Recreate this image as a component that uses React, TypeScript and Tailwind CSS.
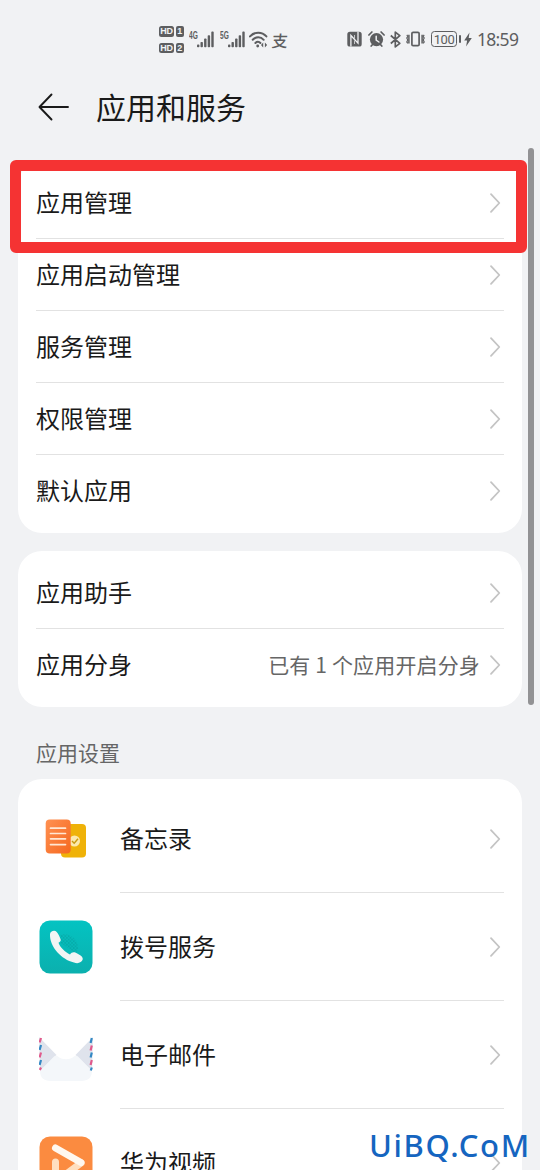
import React from "react";

type Row = {
  label: string;
  value?: string;
  icon?: React.ReactNode;
};

const Chevron = () => (
  <svg width="12" height="22" viewBox="0 0 12 22" fill="none" className="shrink-0">
    <path
      d="M2 2.2 10.3 11 2 19.8"
      stroke="#c4c4c4"
      strokeWidth="1.8"
      strokeLinecap="round"
      strokeLinejoin="round"
    />
  </svg>
);

const HdBadge = ({ sim }: { sim: number }) => (
  <div className="flex gap-[2px] text-[9px] leading-[11px] font-bold text-[#f1f2f4] font-['Liberation_Sans']">
    <span className="w-[15px] h-[10.5px] rounded-[2.5px] bg-[#5d5e60] text-center tracking-[-0.3px]">HD</span>
    <span className="w-[7.5px] h-[10.5px] rounded-[2px] bg-[#5d5e60] text-center">{sim}</span>
  </div>
);

const Signal = ({ type }: { type: string }) => (
  <div className="flex">
    <span className="w-[8px] text-[10px] leading-[9px] font-bold origin-left scale-x-[0.66] font-['Liberation_Sans']">
      {type}
    </span>
    <svg width="17" height="17" viewBox="0 0 17 17" fill="currentColor">
      <rect x="0" y="13.6" width="2.4" height="2.6" rx=".8" />
      <rect x="3.5" y="11" width="2.4" height="5.2" rx=".8" />
      <rect x="7.1" y="7.5" width="2.4" height="8.7" rx=".8" />
      <rect x="10.7" y="4.2" width="2.4" height="12" rx=".8" />
      <rect x="14.3" y=".6" width="2.4" height="15.6" rx=".8" />
    </svg>
  </div>
);

const WifiIcon = () => (
  <svg width="19" height="17" viewBox="0 0 19 17" fill="none" stroke="currentColor" strokeWidth="2" strokeLinecap="round">
    <path d="M1 5.4C5.5.4 13 .4 17.4 5.4M3.7 8.8c3.1-3.3 8-3.3 11 0M6.4 12c1.6-1.6 3.6-1.600 5 0" />
    <circle cx="8.7" cy="15" r="1.4" fill="currentColor" stroke="none" />
    <path d="m14.200 11.600-2.200 2.400 2.200 2.400zM15.900 11.600l2.200 2.400-2.200 2.400z" fill="currentColor" stroke="none" />
  </svg>
);

const NfcIcon = () => (
  <svg width="15" height="16" viewBox="0 0 15 16">
    <rect x=".3" y=".8" width="14.4" height="14.8" rx="2.6" fill="currentColor" />
    <path
      d="M3.9 15.500V4.500L11 12.100V.8"
      fill="none"
      stroke="#f1f2f4"
      strokeWidth="1.300"
    />
    <path d="M7.500 4v3.500M7.500 9.500V13" stroke="#f1f2f4" strokeWidth=".7" />
  </svg>
);

const AlarmIcon = () => (
  <svg width="17" height="16" viewBox="0 0 17 16" fill="none" stroke="currentColor" strokeLinecap="round">
    <circle cx="8.5" cy="8.6" r="6.6" fill="currentColor" stroke="none" />
    <path d="M.9 4 3.900 1M16.100 4 13.100 1M3.200 15l1.600-1.800M13.800 15l-1.600-1.800" strokeWidth="1.7" />
    <path d="M8.2 5.2v4l2.7 1.8" stroke="#f1f2f4" strokeWidth="1.500" />
  </svg>
);

const BluetoothIcon = () => (
  <svg width="11" height="17" viewBox="0 0 11 17" fill="none" stroke="currentColor" strokeWidth="1.7" strokeLinejoin="round">
    <path d="m.8 4.5 9 7.8-4.5 3.6V1.1l4.5 3.6-9 7.8" />
  </svg>
);

const VibrateIcon = () => (
  <svg width="19" height="16" viewBox="0 0 19 16" fill="none" stroke="currentColor" strokeWidth="1.7">
    <rect x="5.900" y="1.300" width="7.200" height="13.400" rx="1.200" />
    <path d="m.8 3.800 1 1.400-1 1.900 1 1.900-1 1.900 1 1.400M18.200 3.800l-1 1.400 1 1.900-1 1.900 1 1.900-1 1.400" strokeWidth="1.200" />
    <path d="M2.900 3.700v8.800M16.100 3.700v8.800" strokeWidth="1.500" />
  </svg>
);

const StatusBar = () => (
  <div className="h-[78px] flex items-center pl-[159px] pr-[22px] text-[#5d5e60]">
    <div className="flex flex-col gap-[6px] w-[30px] pt-px">
      <HdBadge sim={1} />
      <HdBadge sim={2} />
    </div>
    <div className="flex gap-[5.500px] w-[60px]">
      <Signal type="4G" />
      <Signal type="5G" />
    </div>
    <WifiIcon />
    <span className="ml-[4px] mt-px text-[16px] leading-none font-medium -skew-x-6">支</span>
    <div className="ml-auto flex items-center">
      <NfcIcon />
      <span className="w-[6px]" />
      <AlarmIcon />
      <span className="w-[5px]" />
      <BluetoothIcon />
      <span className="w-[5px]" />
      <VibrateIcon />
      <div className="ml-[6px] w-[26px] h-[16px] border-[1.5px] border-[#5d5e60] rounded-[3.5px] flex items-center justify-center text-[13px] leading-none tracking-[-0.4px] font-[Roboto]">
        100
      </div>
      <span className="ml-[2px] w-[2px] h-[8px] rounded-full bg-[#5d5e60]" />
      <svg width="8" height="15" viewBox="0 0 8 14" fill="currentColor" className="ml-[3px]">
        <path d="M5.500 0 .2 8h2.900l-1 6 5.700-8.400H4.700z" />
      </svg>
      <span className="ml-[5px] mt-[2px] w-[41px] text-[17.5px] leading-none tracking-[-0.7px] whitespace-nowrap font-['Noto_Sans']">
        18:59
      </span>
    </div>
  </div>
);

const NotesIcon = () => (
  <svg width="54" height="54" viewBox="0 0 54 54">
    <defs>
      <linearGradient id="notes" x1="0" y1="0" x2="1" y2="1">
        <stop offset="0" stopColor="#ff9152" />
        <stop offset="1" stopColor="#f5681f" />
      </linearGradient>
    </defs>
    <rect x="22" y="12" width="25" height="33.5" rx="4" fill="#efb208" />
    <circle cx="35.5" cy="29" r="5.5" fill="#fbe9ac" />
    <path d="m33 29 2.2 2.3 3.8-4.5" fill="none" stroke="#c99a10" strokeWidth="1.4" />
    <rect x="6.7" y="7.5" width="25" height="34" rx="4" fill="url(#notes)" />
    <path
      d="M11.500 16.200h15M11.500 21.500h15M11.500 26.800h15M11.500 32.600h15"
      stroke="#ffe7d3"
      strokeWidth="1.7"
      strokeLinecap="round"
    />
  </svg>
);

const PhoneIcon = () => (
  <svg width="54" height="54" viewBox="0 0 54 54">
    <defs>
      <linearGradient id="phone" x1="0" y1="0" x2="0" y2="1">
        <stop offset="0" stopColor="#04c3c2" />
        <stop offset="1" stopColor="#0bb0ae" />
      </linearGradient>
      <pattern id="dots" width="3.4" height="3.4" patternUnits="userSpaceOnUse">
        <circle cx=".8" cy=".8" r=".6" fill="#04908f" />
        <circle cx="2.5" cy="2.5" r=".6" fill="#04908f" />
      </pattern>
    </defs>
    <rect x=".5" y=".5" width="53" height="53" rx="10.5" fill="url(#phone)" />
    <path d="M21 15c8-3 18 3 18 13 0 2-1 4-3 5L22 23z" fill="url(#dots)" />
    <path
      d="M11 14.300C11 11.500 15.500 9.500 17.700 12c1.600 1.900 2.900 4.600 3.900 7.200.6 1.700-.4 2.600-2.100 3.600C21.500 28 26 32 31 34.500c1.300-2 3.400-2.900 5.300-1.900 2.600 1.300 5 2.400 6.700 4.100 1.500 1.700.6 4.200-1.300 5.400-2 1.400-4.200 1.400-6.700.5C22.500 39.500 10.500 27 11 14.300z"
      fill="#f1f5f4"
    />
  </svg>
);

const MailIcon = () => (
  <svg width="54" height="54" viewBox="0 0 54 54">
    <path d="M0 9 17.500 27 1 43zM54 9 36.500 27 53 43z" fill="#dfe3ec" />
    <path
      d="M1 43 14.500 29c1.500-1.600 3.500-1.600 5 0 4.500 3 10.500 3 15 0 1.500-1.600 3.500-1.600 5 0L53 43c0 6.500-4 10-10.500 10h-31C5 53 1 49.500 1 43z"
      fill="#f4f7fa"
    />
    <path d="M2 10 .6 14.500M2 24.500.6 29.500M2 39.500.8 42M52.800 17.500l-1.200 5M52.800 32l-1.200 5" stroke="#e05a8c" strokeWidth="2.200" />
    <path d="M2 17 .6 22M2 32 .6 37M52.800 10l-1.200 5M52.800 24.500l-1.200 5M52.800 39.500l-1 3" stroke="#3388c4" strokeWidth="2.200" />
  </svg>
);

const VideoIcon = () => (
  <svg width="54" height="54" viewBox="0 0 54 54">
    <rect x=".5" y=".5" width="53" height="53" rx="10.5" fill="#fb8b40" />
    <path
      d="M16.500 26v20L42 27"
      fill="none"
      stroke="#ffdfbf"
      strokeWidth="7"
      strokeLinecap="round"
      strokeLinejoin="round"
    />
    <path
      d="M16.500 12 42 26.500"
      fill="none"
      stroke="#fff8ef"
      strokeWidth="7"
      strokeLinecap="round"
    />
  </svg>
);

const manageRows: Row[] = [
  { label: "应用管理" },
  { label: "应用启动管理" },
  { label: "服务管理" },
  { label: "权限管理" },
  { label: "默认应用" },
];

const assistantRows: Row[] = [
  { label: "应用助手" },
  { label: "应用分身", value: "已有 1 个应用开启分身" },
];

const appRows: Row[] = [
  { label: "备忘录", icon: <NotesIcon /> },
  { label: "拨号服务", icon: <PhoneIcon /> },
  { label: "电子邮件", icon: <MailIcon /> },
  { label: "华为视频", icon: <VideoIcon /> },
];

const Card = ({ rows }: { rows: Row[] }) => (
  <div className="mx-[18px] px-[18px] py-[6px] bg-white rounded-[24px]">
    {rows.map((row, index) => (
      <div key={row.label} className="flex">
        {row.icon && <div className="w-[84px] shrink-0 flex items-center pl-[3px]">{row.icon}</div>}
        <div
          className={`flex-1 flex items-center justify-between pr-[3px] ${row.icon ? "h-[108px]" : "h-[72px]"} ${
            index < rows.length - 1 ? "border-b border-[#e2e2e2]" : ""
          }`}
        >
          <span className="pb-[2px] text-[24px] leading-none text-[#1a1a1a]">{row.label}</span>
          <div className="flex items-center gap-[9px]">
            {row.value && (
              <span className="pb-[2px] text-[21px] leading-none tracking-[0.15px] text-[#666]">{row.value}</span>
            )}
            <Chevron />
          </div>
        </div>
      </div>
    ))}
  </div>
);

export default function App() {
  return (
    <div className="relative w-[540px] h-[1170px] overflow-hidden bg-[#f1f2f4] font-['Noto_Sans_CJK_SC',sans-serif]">
      <StatusBar />
      <header className="h-[83px] flex items-start pl-[38px] pt-[14px]">
        <svg width="32" height="30" viewBox="0 0 32 30" fill="none" className="shrink-0">
          <path
            d="M30 15H2M13.5 2.5 1.5 15l12 12.5"
            stroke="#1a1a1a"
            strokeWidth="1.9"
            strokeLinecap="round"
            strokeLinejoin="round"
          />
        </svg>
        <h1 className="ml-[26px] text-[30px] leading-[28px] text-[#1a1a1a]">应用和服务</h1>
      </header>

      <Card rows={manageRows} />
      <div className="h-[18px]" />
      <Card rows={assistantRows} />
      <div className="h-[72px] pl-[36px] pt-[35px] text-[21px] leading-[21px] text-[#666]">应用设置</div>
      <Card rows={appRows} />

      {/* highlight around the first entry */}
      <div className="absolute left-[10px] top-[160px] w-[517px] h-[93px] border-[11px] border-[#f53333] rounded-[6px]" />
      <div className="absolute left-[528px] top-[148px] w-[6px] h-[557px] rounded-full bg-[#929294]" />
      <div className="absolute left-[369px] top-[1124px] text-[31px] leading-[42px] tracking-[1.65px] font-medium text-[#1565c0] whitespace-nowrap font-['Noto_Sans']">
        UiBQ.CoM
      </div>
    </div>
  );
}
